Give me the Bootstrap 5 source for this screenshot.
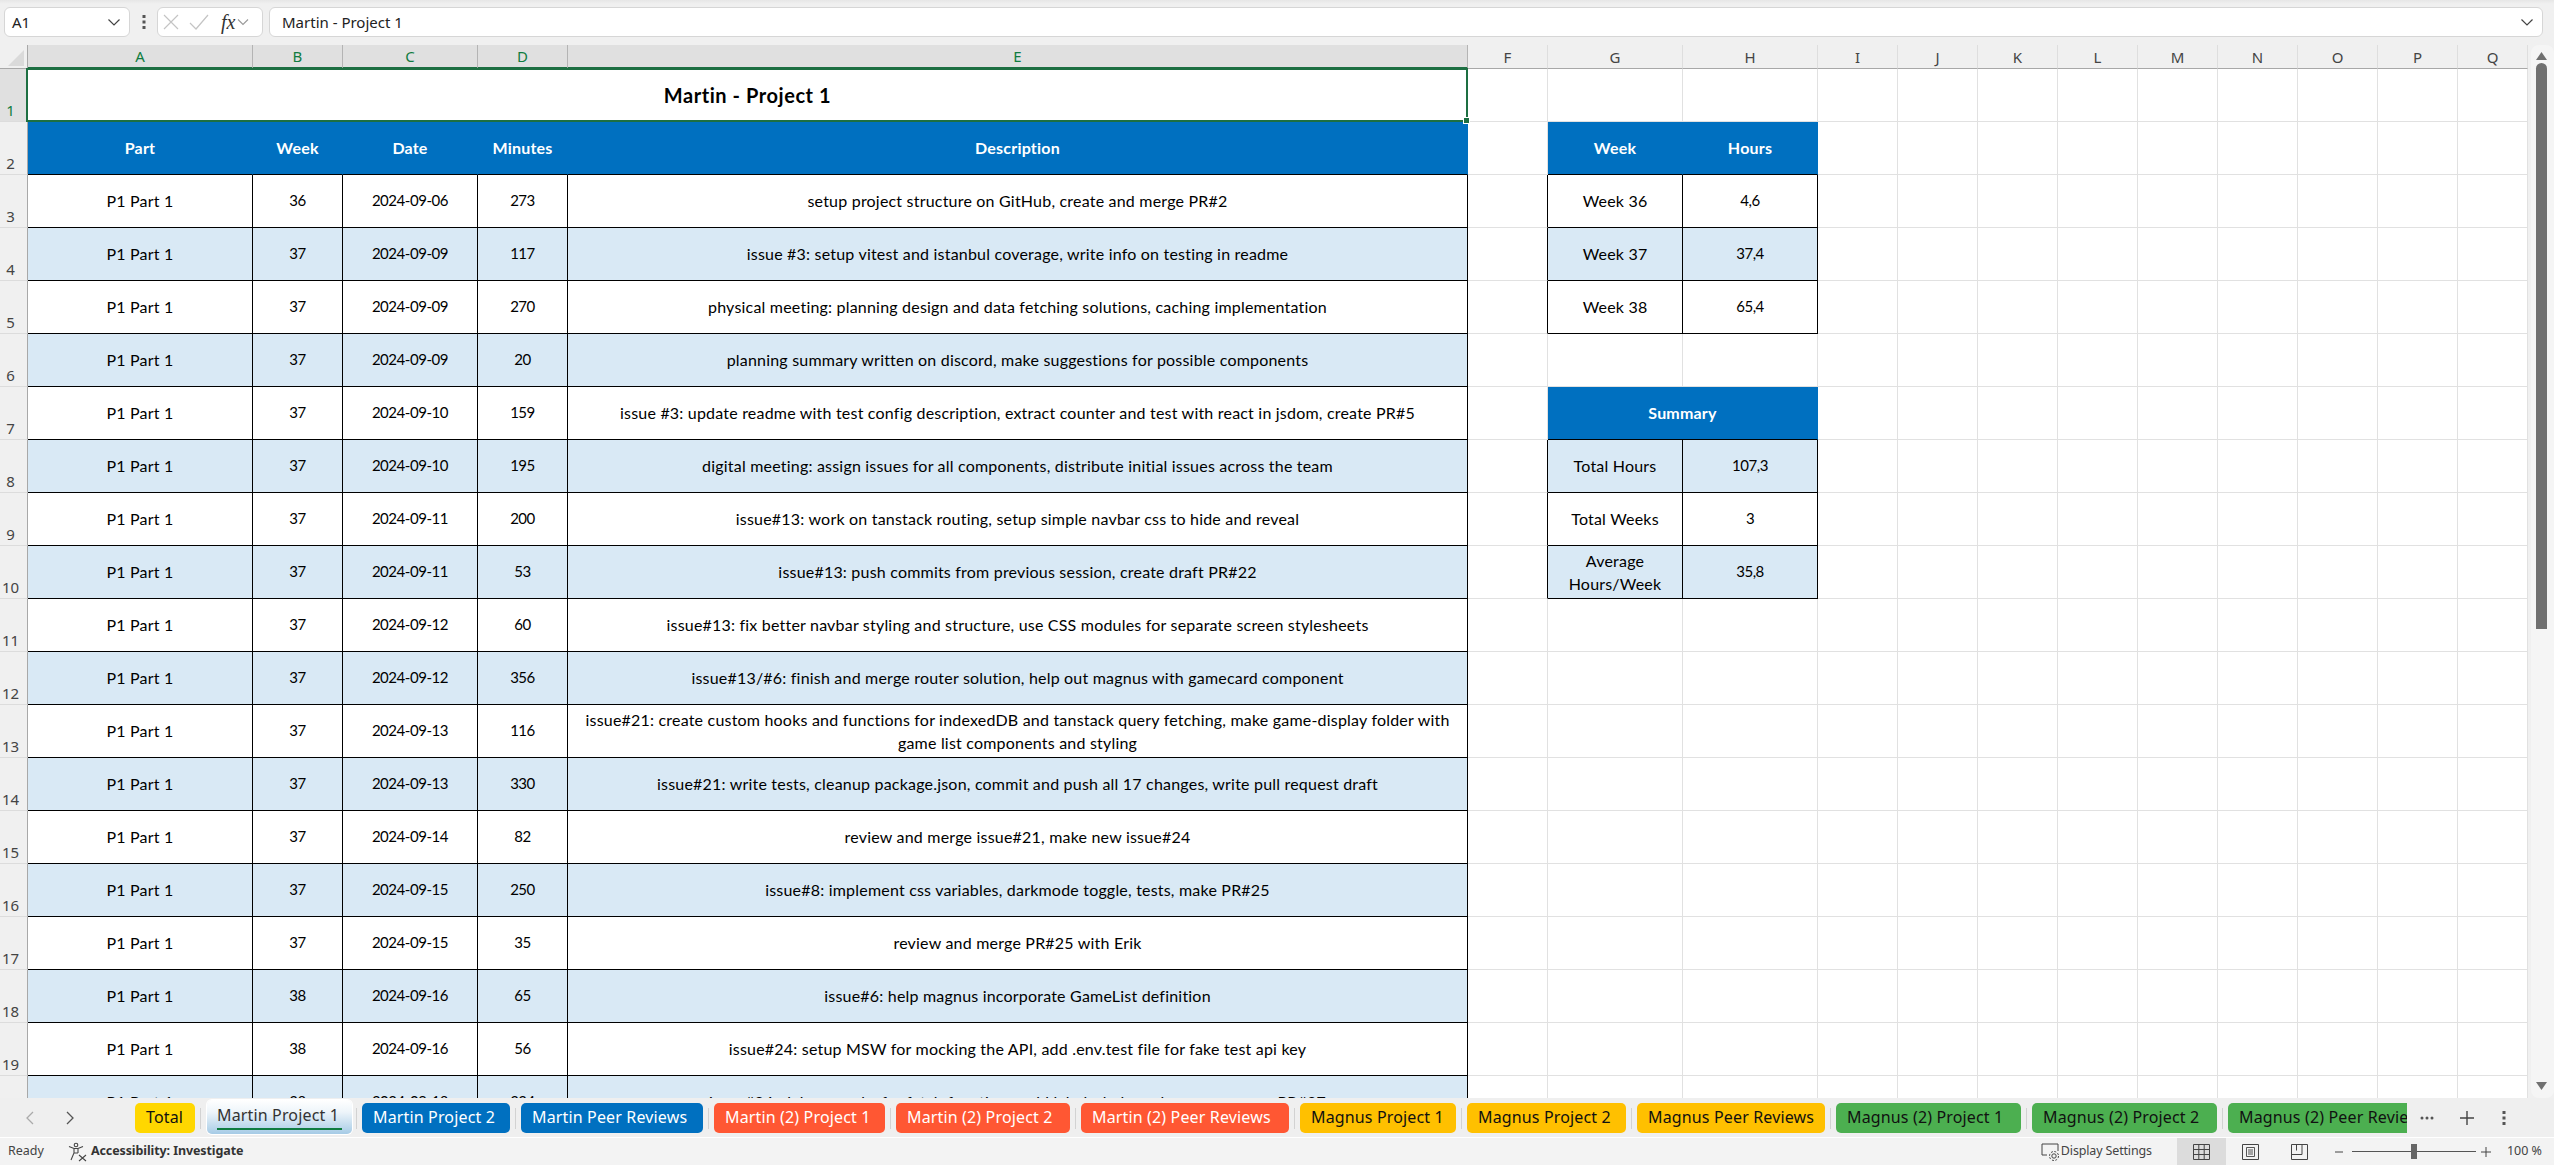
<!DOCTYPE html>
<html lang="en">
<head>
    <meta charset="UTF-8">
    <meta name="viewport" content="width=device-width, initial-scale=1.0">
    <title>Martin - Project 1</title>

    <!-- Bootstrap CSS -->
    <link href="https://cdn.jsdelivr.net/npm/bootstrap@5.3.0/dist/css/bootstrap.min.css" rel="stylesheet">
    <style>
        body { background: #f0f0f0; font-family: "Noto Sans", sans-serif; color: #222; }
        .xl-app { height: 1165px; }

        /* formula bar */
        .xl-fbar { height: 45px; padding: 7px 11px 8px 4px; background: linear-gradient(#e6e6e6, #f0f0f0 4px); }
        .xl-box { height: 30px; background: #fff; border: 1px solid #d6d6d6; border-radius: 6px; font-size: 15px; }
        .xl-name { width: 126px; padding: 0 8px 0 7px; }
        .xl-dots { width: 27px; }
        .xl-fxbox { width: 106px; margin-right: 6px; padding: 0 5px; }
        .xl-fx { font: italic 20px "Liberation Serif", serif; color: #333; margin-left: 12px; margin-right: 2px; }
        .xl-formula { padding: 0 8px 0 12px; }
        .xl-check { margin-left: 10px; }

        /* sheet */
        .xl-sheet { height: 1053px; }
        .xl-scroll { width: 2528px; background: #fff; }
        .xl-grid { width: 2528px; table-layout: fixed; border-collapse: separate; border-spacing: 0; font: 16px/23px Lato, sans-serif; color: #000; letter-spacing: .2px; --bs-table-bg: transparent; }
        .xl-grid tr { height: 53px; }
        .xl-grid thead tr { height: 23px; }
        .xl-grid th, .xl-grid td { padding: 0; box-shadow: none; border-style: solid; border-width: 0 1px 1px 0; border-color: #e1e1e1; }
        .cw-0 { width: 28px; } .cw-a { width: 225px; } .cw-b { width: 90px; } .cw-c { width: 135px; }
        .cw-e { width: 900px; } .cw-f { width: 80px; } .cw-q { width: 70px; }

        .xl-grid .xl-col { background: #f0f0f0; font: 400 15px/22px "Noto Sans", sans-serif; letter-spacing: 0; color: #444; border-color: #dedede #dedede #a8a8a8; }
        .xl-grid .xl-col-on { background: #e0e0e0; color: #107c41; border-right-color: #b4b4b4; border-bottom: 2px solid #1d6f42; }
        .xl-grid .xl-corner { background: #f0f0f0; border-color: #a8a8a8; }
        .xl-corner svg { display: block; }
        .xl-grid .xl-rowhead { background: #f0f0f0; font: 400 15px/22px "Noto Sans", sans-serif; letter-spacing: 0; color: #444; border-right-color: #a8a8a8; border-bottom-color: #dcdcdc; padding-right: 6px; }
        .xl-grid .xl-rowhead-on { background: #e0e0e0; color: #107c41; }

        .xl-grid .xl-title { font-size: 20px; font-weight: 700; letter-spacing: .55px; position: relative; }
        .xl-select { position: absolute; inset: -1px -1px -1px -2px; border: 2px solid #1d6f42; pointer-events: none; }
        .xl-handle { position: absolute; right: -4px; bottom: -4px; width: 7px; height: 7px; background: #1d6f42; border: 1px solid #fff; }

        .xl-grid .xl-head { background: #0070c0; color: #fff; font-weight: 700; border-color: #0070c0 #0070c0 #000; padding-bottom: 1px; }
        .xl-grid .xl-data { border-color: #000; padding-bottom: 1px; }
        .xl-grid .xl-num { font-size: 15px; letter-spacing: -.45px; }
        .xl-grid .xl-band { background: #d9e9f5; }
        .xl-grid .xl-edge { border-right-color: #000; }

        /* vertical scrollbar */
        .xl-vbar { width: 23px; height: 1053px; background: #f5f5f5; border-radius: 8px; padding: 7px 7px 0 5px; }
        .xl-thumb { height: 566px; background: #707070; border-radius: 6px 6px 0 0; margin-top: 3px; }
        .xl-arrow { height: 8px; }

        /* sheet tabs */
        .xl-tabbar { height: 40px; background: #efefef; border-bottom: 1px solid #fff; }
        .xl-tabnav { width: 135px; padding-left: 25px; gap: 30px; }
        .xl-tabs { width: 2272px; gap: 5px; padding-top: 5px; padding-bottom: 4px; }
        .xl-tab { flex: none; height: 30px; border-radius: 5px; font-size: 16px; line-height: 29px; letter-spacing: .15px; white-space: nowrap; overflow: hidden; padding-left: 11px; }
        .xl-sep { flex: none; width: 1px; height: 21px; background: #d2d2d2; align-self: center; }
        .xl-yellow { background: #ffd700; color: #111; }
        .xl-blue { background: #0070c0; color: #fff; }
        .xl-red { background: #ff5733; color: #fff; }
        .xl-amber { background: #ffc000; color: #111; }
        .xl-green { background: #4caf50; color: #111; }
        .xl-active { position: relative; height: 34px; margin: -3px -1px 0 1px; padding-left: 10px; line-height: 30px; color: #333; background: linear-gradient(#fff, #eef5fa 35%, #a6cbe6); box-shadow: 0 0 0 1px #fff; }
        .xl-active::after { content: ""; position: absolute; left: 10px; right: 10px; bottom: 4px; height: 2px; background: #107c41; }
        .xl-tabtools { width: 146px; padding-left: 13px; }
        .xl-plus { margin-left: 25px; }
        .xl-more { margin-left: 27px; }

        /* status bar */
        .xl-status { height: 27px; background: #f3f3f3; font-size: 12.5px; color: #444; }
        .xl-ready { margin-left: 8px; margin-right: 24px; }
        .xl-access { font-weight: 700; color: #333; margin-left: 3px; letter-spacing: -.1px; }
        .xl-display { margin-right: 25px; letter-spacing: -.15px; }
        .xl-view { width: 49px; height: 27px; }
        .xl-view-on { background: #dcdcdc; }
        .xl-views { margin-right: 10px; }
        .xl-zoomline { position: relative; width: 124px; height: 1px; background: #555; margin: 0 5px 0 8px; }
        .xl-knob { position: absolute; left: 59px; top: -7px; width: 6px; height: 15px; background: #666; }
        .xl-pct { margin-left: 16px; margin-right: 12px; }
    </style>
</head>
<body>
    <div class="xl-app d-flex flex-column overflow-hidden">

        <!-- Formula bar -->
        <div class="xl-fbar d-flex align-items-center flex-shrink-0">
            <div class="xl-box xl-name d-flex align-items-center justify-content-between">
                <span>A1</span>
                <svg width="14" height="14" viewBox="0 0 14 14"><path d="M1.5 4.5 7 10l5.5-5.5" fill="none" stroke="#444" stroke-width="1.2"/></svg>
            </div>
            <div class="xl-dots d-flex flex-column align-items-center gap-1">
                <svg width="4" height="16" viewBox="0 0 4 16"><rect x=".5" y="1" width="3" height="3" fill="#555"/><rect x=".5" y="6.500" width="3" height="3" fill="#555"/><rect x=".5" y="12" width="3" height="3" fill="#555"/></svg>
            </div>
            <div class="xl-box xl-fxbox d-flex align-items-center">
                <svg width="16" height="16" viewBox="0 0 16 16"><path d="m1 1 14 14M15 1 1 15" fill="none" stroke="#c4c4c4" stroke-width="1.2"/></svg>
                <svg class="xl-check" width="20" height="16" viewBox="0 0 20 16"><path d="m1 9 6 6L19 1" fill="none" stroke="#c4c4c4" stroke-width="1.2"/></svg>
                <span class="xl-fx">fx</span>
                <svg width="12" height="10" viewBox="0 0 12 10"><path d="m1 2.500 5 5 5-5" fill="none" stroke="#999" stroke-width="1.1"/></svg>
            </div>
            <div class="xl-box xl-formula flex-grow-1 d-flex align-items-center justify-content-between">
                <span>Martin - Project 1</span>
                <svg width="14" height="14" viewBox="0 0 14 14"><path d="M1.5 4.5 7 10l5.5-5.5" fill="none" stroke="#444" stroke-width="1.2"/></svg>
            </div>
        </div>

        <!-- Sheet -->
        <div class="xl-sheet d-flex justify-content-between flex-shrink-0">
            <div class="xl-scroll overflow-hidden">
                <table class="table xl-grid mb-0">
                    <colgroup id="cols"></colgroup>
                    <thead><tr id="colhead"></tr></thead>
                    <tbody id="rows"></tbody>
                </table>
            </div>
            <div class="xl-vbar d-flex flex-column">
                <svg class="xl-arrow" width="11" height="8" viewBox="0 0 11 8"><path d="M5.500 0 11 8H0z" fill="#707070"/></svg>
                <div class="xl-thumb"></div>
                <svg class="xl-arrow mt-auto mb-2" width="11" height="8" viewBox="0 0 11 8"><path d="M5.500 8 11 0H0z" fill="#707070"/></svg>
            </div>
        </div>

        <!-- Sheet tabs -->
        <div class="xl-tabbar d-flex flex-shrink-0">
            <div class="xl-tabnav d-flex align-items-center flex-shrink-0">
                <svg width="10" height="16" viewBox="0 0 10 16"><path d="M8 2 2 8l6 6" fill="none" stroke="#aaa" stroke-width="1.3"/></svg>
                <svg width="10" height="16" viewBox="0 0 10 16"><path d="m2 2 6 6-6 6" fill="none" stroke="#555" stroke-width="1.3"/></svg>
            </div>
            <div class="xl-tabs d-flex overflow-hidden flex-shrink-0" id="tabs"></div>
            <div class="xl-tabtools d-flex align-items-center flex-shrink-0">
                <svg width="14" height="4" viewBox="0 0 14 4"><circle cx="2" cy="2" r="1.500" fill="#555"/><circle cx="7" cy="2" r="1.500" fill="#555"/><circle cx="12" cy="2" r="1.500" fill="#555"/></svg>
                <svg class="xl-plus" width="16" height="16" viewBox="0 0 16 16"><path d="M8 1v14M1 8h14" fill="none" stroke="#444" stroke-width="1.4"/></svg>
                <svg class="xl-more" width="4" height="16" viewBox="0 0 4 16"><rect x=".5" y="1" width="3" height="3" fill="#555"/><rect x=".5" y="6.500" width="3" height="3" fill="#555"/><rect x=".5" y="12" width="3" height="3" fill="#555"/></svg>
            </div>
        </div>

        <!-- Status bar -->
        <div class="xl-status d-flex align-items-center flex-shrink-0">
            <span class="xl-ready">Ready</span>
            <svg width="20" height="20" viewBox="0 0 20 20"><g fill="none" stroke="#444" stroke-width="1.1"><circle cx="8" cy="3" r="1.800"/><path d="M1 4.500 6 6.500h4L15 4.500M6 6.500 6 11 3 18M10 6.500V11M6 11h4"/><path d="m11 13 7 6M18 13l-7 6"/></g></svg>
            <span class="xl-access">Accessibility: Investigate</span>
            <div class="ms-auto d-flex align-items-center">
                <svg width="20" height="20" viewBox="0 0 20 20"><g fill="none" stroke="#444" stroke-width="1"><path d="M6 13H1V2h16v7"/><circle cx="13" cy="14" r="2.200"/><circle cx="13" cy="14" r="4.500" stroke-dasharray="2 1.500"/></g></svg>
                <span class="xl-display">Display Settings</span>
                <div class="xl-views d-flex">
                    <div class="xl-view xl-view-on d-flex align-items-center justify-content-center">
                        <svg width="17" height="16" viewBox="0 0 17 16"><path d="M.5.500h16v15H.500zM.5 5.500h16M.5 10.500h16M5.800.500v15M11.200.500v15" fill="none" stroke="#444"/></svg>
                    </div>
                    <div class="xl-view d-flex align-items-center justify-content-center">
                        <svg width="17" height="16" viewBox="0 0 17 16"><path d="M.5.500h16v15H.500z" fill="none" stroke="#444"/><path d="M4.500 3.500h8v9h-8zM6 6h5M6 8h5M6 10h5" fill="none" stroke="#444" stroke-width=".9"/></svg>
                    </div>
                    <div class="xl-view d-flex align-items-center justify-content-center">
                        <svg width="17" height="16" viewBox="0 0 17 16"><path d="M.5.500h16v15H.500zM.5 10.500h10.500V.500M5.500.500v6" fill="none" stroke="#444"/></svg>
                    </div>
                </div>
                <svg width="10" height="10" viewBox="0 0 10 10"><path d="M1 5h8" stroke="#444"/></svg>
                <div class="xl-zoomline"><div class="xl-knob"></div></div>
                <svg width="10" height="10" viewBox="0 0 10 10"><path d="M0 5h10M5 0v10" stroke="#444"/></svg>
                <span class="xl-pct">100 %</span>
            </div>
        </div>
    </div>

    <!-- Bootstrap JS Bundle -->
    <script src="https://cdn.jsdelivr.net/npm/bootstrap@5.3.0/dist/js/bootstrap.bundle.min.js"></script>

    <script>
        // Column letters and their width classes
        const cols = [['', 'cw-0'], ['A', 'cw-a'], ['B', 'cw-b'], ['C', 'cw-c'], ['D', 'cw-b'], ['E', 'cw-e'], ['F', 'cw-f'], ['G', 'cw-c'], ['H', 'cw-c'],
            ['I', 'cw-f'], ['J', 'cw-f'], ['K', 'cw-f'], ['L', 'cw-f'], ['M', 'cw-f'], ['N', 'cw-f'], ['O', 'cw-f'], ['P', 'cw-f'], ['Q', 'cw-q']];

        const logRows = [
            [36, '2024-09-06', 273, 'setup project structure on GitHub, create and merge PR#2'],
            [37, '2024-09-09', 117, 'issue #3: setup vitest and istanbul coverage, write info on testing in readme'],
            [37, '2024-09-09', 270, 'physical meeting: planning design and data fetching solutions, caching implementation'],
            [37, '2024-09-09', 20, 'planning summary written on discord, make suggestions for possible components'],
            [37, '2024-09-10', 159, 'issue #3: update readme with test config description, extract counter and test with react in jsdom, create PR#5'],
            [37, '2024-09-10', 195, 'digital meeting: assign issues for all components, distribute initial issues across the team'],
            [37, '2024-09-11', 200, 'issue#13: work on tanstack routing, setup simple navbar css to hide and reveal'],
            [37, '2024-09-11', 53, 'issue#13: push commits from previous session, create draft PR#22'],
            [37, '2024-09-12', 60, 'issue#13: fix better navbar styling and structure, use CSS modules for separate screen stylesheets'],
            [37, '2024-09-12', 356, 'issue#13/#6: finish and merge router solution, help out magnus with gamecard component'],
            [37, '2024-09-13', 116, 'issue#21: create custom hooks and functions for indexedDB and tanstack query fetching, make game-display folder with<br>game list components and styling'],
            [37, '2024-09-13', 330, 'issue#21: write tests, cleanup package.json, commit and push all 17 changes, write pull request draft'],
            [37, '2024-09-14', 82, 'review and merge issue#21, make new issue#24'],
            [37, '2024-09-15', 250, 'issue#8: implement css variables, darkmode toggle, tests, make PR#25'],
            [37, '2024-09-15', 35, 'review and merge PR#25 with Erik'],
            [38, '2024-09-16', 65, 'issue#6: help magnus incorporate GameList definition'],
            [38, '2024-09-16', 56, 'issue#24: setup MSW for mocking the API, add .env.test file for fake test api key'],
            [38, '2024-09-18', 334, 'issue#24: debug mocks for fetch functions, add labels, help and merge magnus PR#27']
        ];

        // Side tables, keyed by sheet row number
        const side = {
            2: { head: ['Week', 'Hours'] },
            3: { cells: ['Week 36', '4,6'] },
            4: { cells: ['Week 37', '37,4'], band: true },
            5: { cells: ['Week 38', '65,4'] },
            7: { span: 'Summary' },
            8: { cells: ['Total Hours', '107,3'], band: true },
            9: { cells: ['Total Weeks', '3'] },
            10: { cells: ['Average<br>Hours/Week', '35,8'], band: true }
        };

        document.getElementById('cols').innerHTML = cols.map(c => `<col class="${c[1]}">`).join('');

        document.getElementById('colhead').innerHTML = cols.map((c, i) => {
            if (i === 0) return '<th class="xl-corner"><svg width="26" height="22" viewBox="0 0 26 22"><path d="M8 20 24 4v16z" fill="#dadada"/></svg></th>';
            return `<th class="xl-col text-center align-middle ${i <= 5 ? 'xl-col-on' : ''}">${c[0]}</th>`;
        }).join('');

        function blanks(from) {
            let html = '';
            for (let i = from; i < cols.length; i++) html += '<td></td>';
            return html;
        }

        function sidePart(n) {
            const s = side[n];
            if (!s) return '<td></td><td></td><td></td>';
            if (s.head) return `<td></td>${s.head.map(t => `<td class="xl-head text-center align-middle">${t}</td>`).join('')}`;
            if (s.span) return `<td></td><td colspan="2" class="xl-head text-center align-middle">${s.span}</td>`;
            const cls = 'xl-data text-center align-middle' + (s.band ? ' xl-band' : '');
            return `<td class="xl-edge"></td><td class="${cls}">${s.cells[0]}</td><td class="${cls} xl-num">${s.cells[1]}</td>`;
        }

        let body = '<tr><th class="xl-rowhead xl-rowhead-on text-center align-bottom">1</th>' +
            '<td colspan="5" class="xl-title text-center align-middle">Martin - Project 1<div class="xl-select"><div class="xl-handle"></div></div></td>' +
            blanks(6) + '</tr>';

        body += '<tr><th class="xl-rowhead text-center align-bottom">2</th>' +
            ['Part', 'Week', 'Date', 'Minutes', 'Description'].map(t => `<td class="xl-head text-center align-middle">${t}</td>`).join('') +
            sidePart(2) + blanks(9) + '</tr>';

        logRows.forEach((r, i) => {
            const n = i + 3;
            const cls = 'xl-data text-center align-middle' + (n % 2 === 0 ? ' xl-band' : '');
            body += `<tr><th class="xl-rowhead text-center align-bottom">${n}</th>` +
                `<td class="${cls}">P1 Part 1</td><td class="${cls} xl-num">${r[0]}</td><td class="${cls} xl-num">${r[1]}</td><td class="${cls} xl-num">${r[2]}</td><td class="${cls}">${r[3]}</td>` +
                sidePart(n) + blanks(9) + '</tr>';
        });
        document.getElementById('rows').innerHTML = body;

        // Sheet tabs: name, colour class, tab width
        const tabs = [['Total', 'xl-yellow', 60], ['Martin Project 1', 'xl-active', 145], ['Martin Project 2', 'xl-blue', 148], ['Martin Peer Reviews', 'xl-blue', 182],
            ['Martin (2) Project 1', 'xl-red', 171], ['Martin (2) Project 2', 'xl-red', 174], ['Martin (2) Peer Reviews', 'xl-red', 208],
            ['Magnus Project 1', 'xl-amber', 156], ['Magnus Project 2', 'xl-amber', 159], ['Magnus Peer Reviews', 'xl-amber', 188],
            ['Magnus (2) Project 1', 'xl-green', 185], ['Magnus (2) Project 2', 'xl-green', 185], ['Magnus (2) Peer Reviews', 'xl-green', 210]];
        const tabsEl = document.getElementById('tabs');
        tabs.forEach((t, i) => {
            if (i > 0) tabsEl.insertAdjacentHTML('beforeend', '<i class="xl-sep"></i>');
            const tab = document.createElement('div');
            tab.className = 'xl-tab ' + t[1];
            tab.style.width = t[2] + 'px';
            tab.textContent = t[0];
            tabsEl.appendChild(tab);
        });
    </script>

</body>
</html>
